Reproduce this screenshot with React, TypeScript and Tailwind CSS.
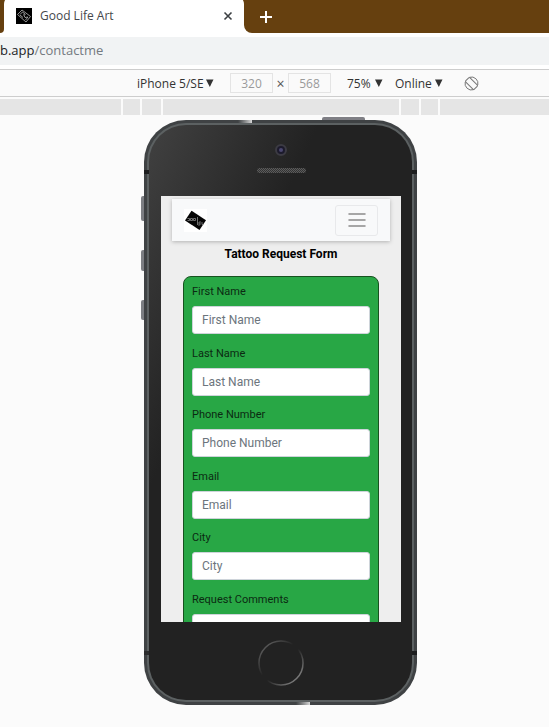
import React from "react";

const sans = "font-['Open_Sans','Noto_Sans',sans-serif]";
const roboto = "font-[Roboto,sans-serif]";

function TabBar() {
  return (
    <div className="flex h-[33px] overflow-hidden bg-[#66400f]">
      <div className="w-1 bg-white">
        <div className="h-full rounded-br-lg bg-[#66400f]" />
      </div>
      <div className="-mt-1 flex h-[38px] w-60 items-center rounded-t-lg bg-white pl-3 pr-[11px] pt-px">
        <svg width="16" height="16" viewBox="0 0 16 16" aria-hidden="true">
          <rect width="16" height="16" fill="#000" />
          <g fill="none" stroke="#bbb" strokeWidth="0.8">
            <path d="M1.5 6.5 6 2l8.5 6.5L10 14z" />
            <path d="M4 6.5 6.5 4 9 6M4 7l3 2.5M7.5 6.500 9 9.500l3-.5M8 7l1.500-.5M9.500 12l2.500-3" />
          </g>
        </svg>
        <span className="ml-2 flex-1 text-xs text-[#45484c]">Good Life Art</span>
        <button aria-label="Close tab" className="text-[#3c4043]">
          <svg width="10" height="10" viewBox="0 0 10 10" stroke="currentColor" strokeWidth="1.6">
            <path d="M1.500 1.500l7 7M8.500 1.500l-7 7" />
          </svg>
        </button>
      </div>
      <div className="flex-1 bg-white">
        <div className="flex h-full items-center rounded-bl-lg bg-[#66400f] pl-4">
          <button aria-label="New tab" className="text-white">
            <svg width="12" height="12" viewBox="0 0 12 12" stroke="currentColor" strokeWidth="2">
              <path d="M6 0v12M0 6h12" />
            </svg>
          </button>
        </div>
      </div>
    </div>
  );
}

function DropDown({ label, value, width }: { label: string; value: string; width: string }) {
  return (
    <label className="flex items-center">
      <select
        aria-label={label}
        defaultValue={value}
        className={`${width} appearance-none bg-transparent pt-0.5 text-xs text-[#333] outline-none`}
      >
        <option>{value}</option>
      </select>
      <svg width="8" height="8" viewBox="0 0 8 8" fill="#333" aria-hidden="true">
        <path d="M0 .5h7.500L3.800 8z" />
      </svg>
    </label>
  );
}

function SizeBox({ label, value }: { label: string; value: string }) {
  return (
    <input
      aria-label={label}
      defaultValue={value}
      className="h-5 w-[43px] border border-[#e4e4e4] bg-transparent text-center text-xs text-[#9a9a9a] outline-none"
    />
  );
}

function DeviceToolbar() {
  return (
    <div className="flex h-7 items-center justify-center border-y border-[#cdcdcd] bg-[#fafafa] pl-[67px]">
      <DropDown label="Device" value="iPhone 5/SE" width="w-[69px]" />
      <div className="ml-4 flex items-center">
        <SizeBox label="Width" value="320" />
        <span className="w-[15px] pt-0.5 text-center text-sm text-[#555]">×</span>
        <SizeBox label="Height" value="568" />
      </div>
      <div className="ml-4 flex items-center gap-3">
        <DropDown label="Zoom" value="75%" width="w-7" />
        <DropDown label="Network" value="Online" width="w-10" />
      </div>
      <button aria-label="Rotate" className="ml-[21px] text-[#777]">
        <svg width="15" height="15" viewBox="0 0 15 15" fill="none" stroke="currentColor">
          <g transform="rotate(-45 7.500 7.500)">
            <rect x="4.500" y="1.500" width="6" height="12" rx="1" />
          </g>
          <path d="M5.500 1.300A6.500 6.500 0 0 1 13.800 9M1.200 6A6.500 6.500 0 0 0 9.500 13.700" />
        </svg>
      </button>
    </div>
  );
}

function Ruler() {
  return (
    <div className="mt-0.5 flex h-4 gap-0.5">
      <div className="grow basis-3 bg-[#e5e5e5]" />
      <div className="w-[17px] bg-[#e5e5e5]" />
      <div className="w-[19px] bg-[#e5e5e5]" />
      <div className="w-[236px] bg-[#e5e5e5]" />
      <div className="w-[18px] bg-[#e5e5e5]" />
      <div className="w-[17px] bg-[#e5e5e5]" />
      <div className="grow basis-0 bg-[#e5e5e5]" />
    </div>
  );
}

function Field({ name }: { name: string }) {
  const id = name.toLowerCase().replace(" ", "-");
  return (
    <div>
      <label htmlFor={id} className="block h-[22px] text-[11px] leading-4 text-[#0b2a12]">
        {name}
      </label>
      <input
        id={id}
        placeholder={name}
        className="block h-7 w-full rounded-[3px] border border-[#ced4da] bg-white px-[9px] text-xs text-[#495057] outline-none placeholder:text-[#6c757d]"
      />
    </div>
  );
}

function ContactPage() {
  return (
    <main className={`h-[426px] overflow-hidden bg-[#eee] px-[11px] pt-[3px] ${roboto}`}>
      <nav className="flex h-[42px] items-center justify-between bg-[#f8f9fa] px-3 shadow-[0_1px_4px_rgba(0,0,0,0.25)]">
        <a href="#home" aria-label="Good Life Art" className="bg-white">
          <svg width="23" height="23" viewBox="0 0 23 23">
            <path d="M7.500 1.800 22 11.200 15.500 21 1 11.500z" fill="#050505" />
            <g fill="none" stroke="#888" strokeWidth="0.800">
              <path d="M3.500 9.500h2M3.500 11.500h2v-2M6.500 11.500v-2h2v2zM9.500 11.500v-2h2v2zM13.500 8v8M15 17v-4h2M15 15h2M18 13v2.500h1.500" />
            </g>
          </svg>
        </a>
        <button
          aria-label="Menu"
          className="flex h-[31px] w-[43px] items-center justify-center rounded-[3px] border border-[#e8e9eb]"
        >
          <svg width="18" height="16" viewBox="0 0 18 16" stroke="#8a8a8b" strokeWidth="1.500" strokeLinecap="round">
            <path d="M1 2h16M1 8h16M1 14h16" />
          </svg>
        </button>
      </nav>
      <h1 className="mt-1 text-center text-xs leading-[18px] font-bold text-black">Tattoo Request Form</h1>
      <form className="mx-[11px] mt-[13px] rounded-lg border border-[#17521f] bg-[#28a745] px-2 pt-[7px]">
        <div className="grid h-[308px] grid-rows-5">
          <Field name="First Name" />
          <Field name="Last Name" />
          <Field name="Phone Number" />
          <Field name="Email" />
          <Field name="City" />
        </div>
        <label htmlFor="comments" className="block h-[22px] text-[11px] leading-4 text-[#0b2a12]">
          Request Comments
        </label>
        <textarea
          id="comments"
          rows={3}
          className="block w-full resize-none rounded-[3px] border border-[#ced4da] bg-white outline-none"
        />
      </form>
    </main>
  );
}

function Phone() {
  return (
    <div className="relative w-[273px]">
      <div className="absolute -left-[3px] top-[76px] h-[25px] w-1 rounded-l-xs bg-[#7c7e83]" />
      <div className="absolute -left-[3px] top-[130px] h-[21px] w-1 rounded-l-xs bg-[#7c7e83]" />
      <div className="absolute -left-[3px] top-[180px] h-5 w-1 rounded-l-xs bg-[#7c7e83]" />
      <div className="absolute -top-[3px] left-[178px] h-1 w-[43px] rounded-t-xs bg-[#7f7f85]" />
      <div className="relative rounded-[42px] bg-[#3f4244] p-[3px]">
        <div className="rounded-[39px] bg-[#5c6162] p-0.5">
          <div className="rounded-[37px] bg-[linear-gradient(115deg,#414141_0%,#222_32%)] pl-3 pr-[11px]">
            <div className="flex h-[71px] flex-col items-center pt-[19px]">
              <div className="flex size-3 items-center justify-center rounded-full border-2 border-[#3c3b43] bg-[#1c1a2c]">
                <div className="size-1 rounded-full bg-[#4b4770]" />
              </div>
              <div className="mt-3 h-[5px] w-[49px] rounded-full bg-[repeating-conic-gradient(#333_0_25%,#5c5c5c_0_50%)] bg-size-[2px_2px]" />
            </div>
            <ContactPage />
            <div className="flex h-[78px] items-start justify-center pt-[18px]">
              <button aria-label="Home" className="size-[46px] rounded-full">
                <svg width="46" height="46" viewBox="0 0 46 46" fill="none" strokeWidth="1.500">
                  <defs>
                    <linearGradient id="ring" x1="0.15" y1="0.15" x2="0.85" y2="0.85">
                      <stop offset="0" stopColor="#555" />
                      <stop offset="0.4" stopColor="#222" />
                      <stop offset="0.55" stopColor="#222" />
                      <stop offset="1" stopColor="#777" />
                    </linearGradient>
                  </defs>
                  <circle cx="23" cy="23" r="22" stroke="url(#ring)" />
                </svg>
              </button>
            </div>
          </div>
        </div>
        <div className="absolute left-0 top-[50px] h-1 w-[5px] bg-[#1d1e1f]" />
        <div className="absolute right-0 top-[50px] h-1 w-[5px] bg-[#1d1e1f]" />
        <div className="absolute bottom-[50px] left-0 h-1 w-[5px] bg-[#2b2c2d]" />
        <div className="absolute bottom-[50px] right-0 h-1 w-[5px] bg-[#1d1e1f]" />
        <div className="absolute left-[94px] top-0 h-[3px] w-3.5 bg-linear-to-r from-[#3f4244] to-[#d8d8d8]" />
        <div className="absolute bottom-0 left-[152px] h-[3px] w-3.5 bg-linear-to-r from-[#3f4244] to-[#d8d8d8]" />
      </div>
    </div>
  );
}

export default function App() {
  return (
    <div className={`min-h-screen overflow-hidden bg-[#fbfbfb] ${sans}`}>
      <TabBar />
      <div className="bg-white py-1">
        <div className="flex h-7 items-center bg-[#f1f3f4] text-[13px] text-[#747a80]">
          <span className="text-[#202124]">b.app</span>/contactme
        </div>
      </div>
      <DeviceToolbar />
      <Ruler />
      <div className="flex justify-center pb-5 pl-3 pt-[5px]">
        <Phone />
      </div>
    </div>
  );
}
